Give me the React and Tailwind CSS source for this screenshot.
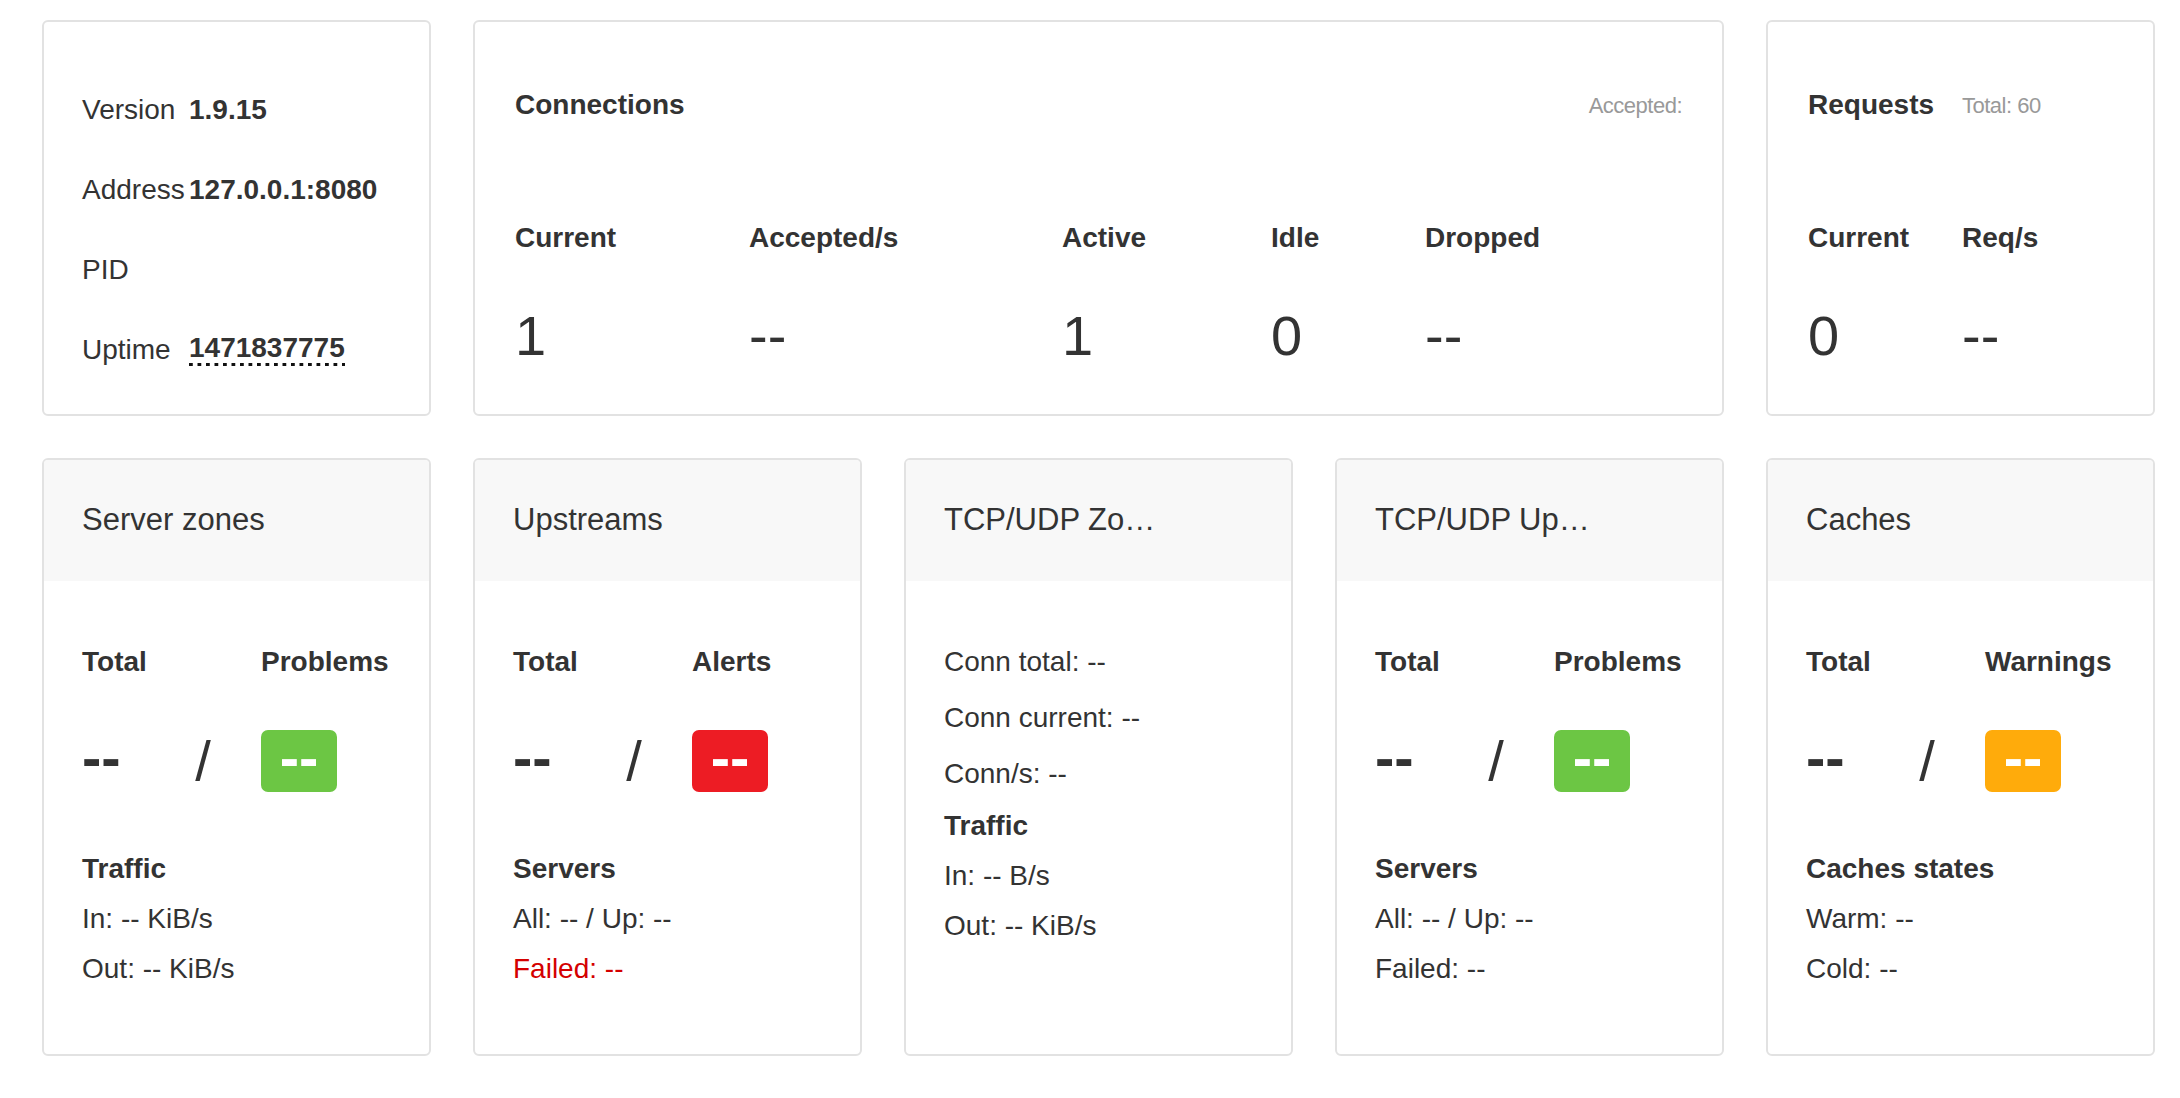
import React from "react";

const font = { fontFamily: '"Liberation Sans", Arial, sans-serif' };

const Card = ({ className = "", children }) => (
  <div className={`border-2 border-[#e2e2e2] rounded-[6px] bg-white overflow-hidden ${className}`}>
    {children}
  </div>
);

const InfoRow = ({ label, value, dotted }) => (
  <div className="flex items-center h-[80px]">
    <span className="w-[107px]">{label}</span>
    {value && (
      <span
        className={`font-bold ${
          dotted
            ? "inline-block leading-none pb-[4px] bg-[linear-gradient(to_right,#111_50%,transparent_50%)] bg-[length:8.5px_3px] bg-repeat-x bg-left-bottom"
            : ""
        }`}
      >
        {value}
      </span>
    )}
  </div>
);

const StatusBadge = ({ color }) => (
  <span
    className={`inline-flex items-center justify-center w-[76px] h-[62px] rounded-[7px] text-white font-bold text-[58px] leading-none pb-[6px] ${color}`}
  >
    --
  </span>
);

const SummaryCard = ({ title, right, badge, section, lines }) => (
  <Card className="h-[598px]">
    <div className="h-[121px] bg-[#f8f8f8] flex items-center px-[38px] text-[31px]">
      {title}
    </div>
    <div className="px-[38px]">
      <div className="flex mt-[61px] leading-[40px] font-bold">
        <span className="w-[179px]">Total</span>
        <span>{right}</span>
      </div>
      <div className="flex items-center mt-[48px] h-[62px]">
        <span className="w-[110px] font-bold text-[58px] leading-none pb-[6px]">--</span>
        <span className="w-[22px] text-center text-[56px] leading-none">/</span>
        <span className="ml-[47px]">
          <StatusBadge color={badge} />
        </span>
      </div>
      <div className="mt-[52px] leading-[50px] font-bold">{section}</div>
      {lines.map((l) => (
        <div key={l.text} className={`leading-[50px] ${l.red ? "text-[#d40000]" : ""}`}>
          {l.text}
        </div>
      ))}
    </div>
  </Card>
);

export default function App() {
  const connCols = [
    { label: "Current", value: "1", w: "w-[234px]" },
    { label: "Accepted/s", value: "--", w: "w-[313px]" },
    { label: "Active", value: "1", w: "w-[209px]" },
    { label: "Idle", value: "0", w: "w-[154px]" },
    { label: "Dropped", value: "--", w: "w-[150px]" },
  ];

  return (
    <div
      className="w-[2180px] h-[1098px] bg-white text-[#333] text-[28px] pt-[20px] pl-[42px]"
      style={font}
    >
      <div className="grid grid-cols-[repeat(5,389px)] gap-[42px]">
        {/* Info */}
        <Card className="h-[396px] px-[38px] pt-[48px]">
          <InfoRow label="Version" value="1.9.15" />
          <InfoRow label="Address" value="127.0.0.1:8080" />
          <InfoRow label="PID" />
          <InfoRow label="Uptime" value="1471837775" dotted />
        </Card>

        {/* Connections */}
        <Card className="col-span-3 h-[396px] px-[40px] pt-[63px]">
          <div className="flex justify-between items-center h-[40px]">
            <span className="font-bold">Connections</span>
            <span className="text-[22px] text-[#999] tracking-[-0.5px]">Accepted:</span>
          </div>
          <div className="flex mt-[93px] h-[40px] items-center font-bold">
            {connCols.map((c) => (
              <span key={c.label} className={c.w}>
                {c.label}
              </span>
            ))}
          </div>
          <div className="flex mt-[46px] h-[64px] items-center text-[56px] leading-none">
            {connCols.map((c) => (
              <span key={c.label} className={c.w}>
                {c.value}
              </span>
            ))}
          </div>
        </Card>

        {/* Requests */}
        <Card className="h-[396px] px-[40px] pt-[63px]">
          <div className="flex items-center h-[40px]">
            <span className="w-[154px] font-bold">Requests</span>
            <span className="text-[22px] text-[#999] tracking-[-0.5px]">Total: 60</span>
          </div>
          <div className="flex mt-[93px] h-[40px] items-center font-bold">
            <span className="w-[154px]">Current</span>
            <span>Req/s</span>
          </div>
          <div className="flex mt-[46px] h-[64px] items-center text-[56px] leading-none">
            <span className="w-[154px]">0</span>
            <span>--</span>
          </div>
        </Card>

        <SummaryCard
          title="Server zones"
          right="Problems"
          badge="bg-[#6cc644]"
          section="Traffic"
          lines={[{ text: "In: -- KiB/s" }, { text: "Out: -- KiB/s" }]}
        />
        <SummaryCard
          title="Upstreams"
          right="Alerts"
          badge="bg-[#ed1c24]"
          section="Servers"
          lines={[{ text: "All: -- / Up: --" }, { text: "Failed: --", red: true }]}
        />

        {/* TCP/UDP Zones */}
        <Card className="h-[598px]">
          <div className="h-[121px] bg-[#f8f8f8] flex items-center px-[38px] text-[31px]">
            TCP/UDP Zo…
          </div>
          <div className="px-[38px] pt-[53px]">
            <div className="leading-[56px]">Conn total: --</div>
            <div className="leading-[56px]">Conn current: --</div>
            <div className="leading-[55px]">Conn/s: --</div>
            <div className="leading-[50px] font-bold">Traffic</div>
            <div className="leading-[50px]">In: -- B/s</div>
            <div className="leading-[50px]">Out: -- KiB/s</div>
          </div>
        </Card>

        <SummaryCard
          title="TCP/UDP Up…"
          right="Problems"
          badge="bg-[#6cc644]"
          section="Servers"
          lines={[{ text: "All: -- / Up: --" }, { text: "Failed: --" }]}
        />
        <SummaryCard
          title="Caches"
          right="Warnings"
          badge="bg-[#ffab0b]"
          section="Caches states"
          lines={[{ text: "Warm: --" }, { text: "Cold: --" }]}
        />
      </div>
    </div>
  );
}
